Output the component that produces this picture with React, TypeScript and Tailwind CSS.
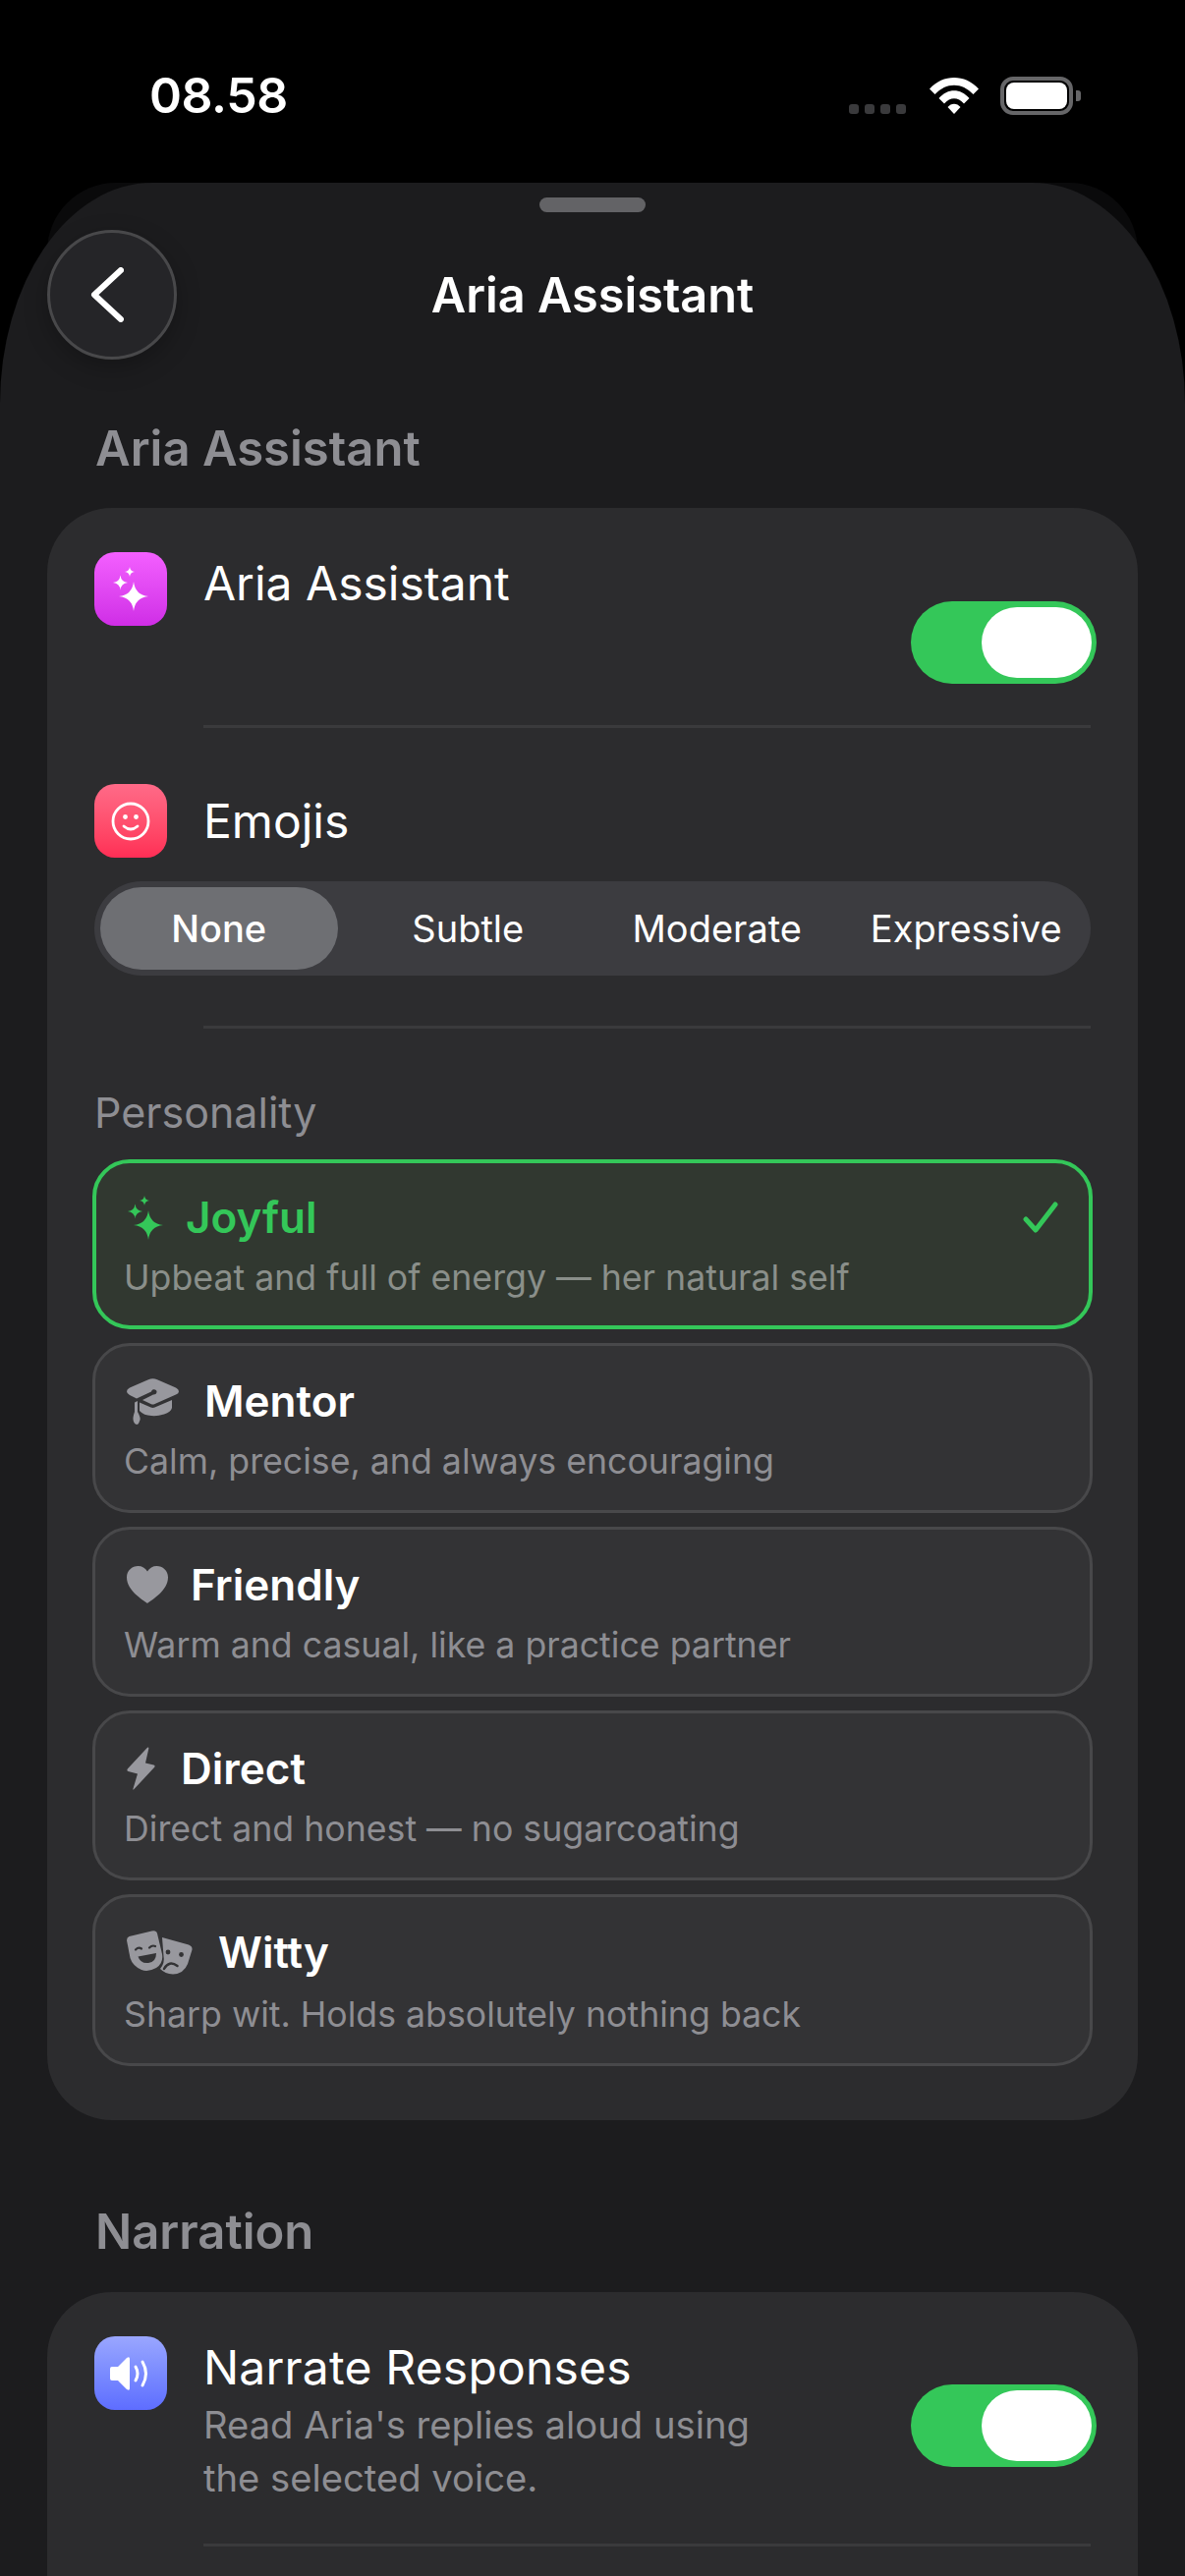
import React from "react";

const star = (cx: number, cy: number, r: number) => {
  const k = r * 0.1;
  return `M${cx} ${cy - r}Q${cx + k} ${cy - k} ${cx + r} ${cy}Q${cx + k} ${cy + k} ${cx} ${cy + r}Q${cx - k} ${cy + k} ${cx - r} ${cy}Q${cx - k} ${cy - k} ${cx} ${cy - r}Z`;
};

function Sparkles({ className }: { className: string }) {
  return (
    <svg viewBox="0 0 36 45" className={className} fill="currentColor">
      <path d={star(21, 30, 15)} />
      <path d={star(7.5, 16, 7.5)} />
      <path d={star(17, 5, 5)} />
    </svg>
  );
}

function Toggle({ className }: { className: string }) {
  return (
    <div className={`-mr-[6px] flex h-[84px] w-[189px] shrink-0 items-center justify-end rounded-full bg-[#34c759] pr-[5px] ${className}`}>
      <div className="h-[72px] w-[112px] rounded-full bg-white" />
    </div>
  );
}

function Divider() {
  return <div className="ml-[111px] h-[3px] bg-[#3a3a3c]" />;
}

function IconTile({ className, children }: { className: string; children: React.ReactNode }) {
  return (
    <div className={`flex h-[75px] w-[74px] shrink-0 items-center justify-center rounded-[21px] ${className}`}>
      {children}
    </div>
  );
}

function Mentor() {
  return (
    <svg viewBox="0 0 53 47" className="h-[47px] w-[53px]" fill="#98989e">
      <path d="M22 1.2Q26.5-.6 31 1.2L50 9.4Q53 11 53 13.2 53 15.3 50 16.6L28 26.2Q26.5 26.8 25 26.2L16 22 27 16.6Q30 16.8 30.6 14 30.4 10.8 27 11.2 25.4 11.6 25 13.4L10 20.6 3 17Q0 15.4 0 13.2 0 11 3 9.4Z" />
      <path d="M13 24.5 24.5 29.6Q26.5 30.4 28.5 29.6L46 22V30Q45 34 38 36.5 31 38.6 25 38 17.5 37.8 13 33Z" />
      <path d="M8 24.5 11 23V34Q15 41 13 43.5 12 47 10 47 8 47 7 44 5.6 40.5 8 34Z" />
    </svg>
  );
}

function Heart() {
  return (
    <svg viewBox="0 0 42 38" className="h-[38px] w-[42px]" fill="#98989e">
      <path d="M21 38C17 35 0 25 0 11.5 0 4.500 5.500 0 11.500 0 15.500 0 19 2 21 5.500 23 2 26.500 0 30.500 0 36.500 0 42 4.500 42 11.500 42 25 25 35 21 38Z" />
    </svg>
  );
}

function Bolt() {
  return (
    <svg viewBox="0 0 29 44" className="h-[44px] w-[29px]" fill="#98989e">
      <path d="M21 .8Q22.600 0 22.300 2L19 16.500 27.500 18.500Q29.500 19.500 28 21L7.500 43Q6 44.500 6.500 42.500L11 27.500 1.500 25Q-.5 24 1 22.300Z" />
    </svg>
  );
}

function Masks() {
  return (
    <svg viewBox="0 0 67 45" className="h-[45px] w-[67px]">
      <path d="M36 7 63 14.500Q67 16 66.500 19.500L62 34Q58 44 47 44.500 39 44 34 39 39 33 37.500 26Z" fill="#98989e" />
      <path d="M2.500 6 25.500.5Q30-.5 31 3L36 24Q37.500 33 30 38 22 42.500 15 40 6 36 3.500 28L0 10Q0 7 2.500 6Z" fill="#98989e" />
      <circle cx="42" cy="22" r="2.400" fill="#333335" />
      <circle cx="55.500" cy="24.500" r="2.400" fill="#333335" />
      <path d="M38 39Q43 30 51.500 36" fill="none" stroke="#333335" strokeWidth="2.500" strokeLinecap="round" />
      <path d="M9 19.500Q12 16.500 15 18.500M23 17.500Q26 14.500 29 16" fill="none" stroke="#333335" strokeWidth="2.200" strokeLinecap="round" />
      <path d="M11.500 26.500 30 23Q30 32 22 33 14 34 11.500 26.500Z" fill="#333335" />
    </svg>
  );
}

const personalities = [
  { name: "Mentor", sub: "Calm, precise, and always encouraging", icon: <Mentor />, gap: "gap-[26px]", box: "h-[173px]", subGap: "mt-[7px]" },
  { name: "Friendly", sub: "Warm and casual, like a practice partner", icon: <Heart />, gap: "gap-[23px]", box: "h-[173px]", subGap: "mt-[7px]" },
  { name: "Direct", sub: "Direct and honest — no sugarcoating", icon: <Bolt />, gap: "gap-[26px]", box: "h-[173px]", subGap: "mt-[7px]" },
  { name: "Witty", sub: "Sharp wit. Holds absolutely nothing back", icon: <Masks />, gap: "gap-[26px]", box: "h-[175px]", subGap: "mt-[9px]" },
];

export default function App() {
  return (
    <div className="relative flex h-[2622px] w-[1206px] flex-col overflow-hidden bg-black font-['Inter',sans-serif] text-white">
      <div className="flex h-[186px] shrink-0 items-start justify-between pl-[152px] pr-[106px] pt-[72px]">
        <div className="text-[50px] font-semibold leading-[50px] tracking-[-0.4px]">08.58</div>
        <div className="flex items-start pt-[6px]">
          <div className="mr-[24px] mt-[28px] flex gap-[6px]">
            {[0, 1, 2, 3].map((i) => (
              <div key={i} className="h-[10px] w-[10px] rounded-[3px] bg-[#3a3a3c]" />
            ))}
          </div>
          <svg viewBox="0 0 50 37" className="mr-[22px] mt-[1px] h-[37px] w-[50px]" fill="white">
            <path d="M0 11.500C14-3.800 36-3.800 50 11.500L44.500 17C33 4.500 17 4.500 5.500 17Z" />
            <path d="M9.500 21C18.500 10.500 31.500 10.500 40.500 21L35 26.500C29 19.500 21 19.500 15 26.500Z" />
            <path d="M18.500 30C22 25.500 28 25.500 31.500 30L25 37Z" />
          </svg>
          <div className="flex items-center">
            <div className="flex h-[39px] w-[74px] items-center justify-center rounded-[13px] border-[4px] border-[#666668]">
              <div className="h-[27px] w-[62px] rounded-[8px] bg-white" />
            </div>
            <div className="ml-[3px] h-[11px] w-[5px] rounded-r-[3px] bg-[#666668]" />
          </div>
        </div>
      </div>

      <div className="absolute left-[48px] right-[48px] top-[186px] h-[120px] rounded-t-[70px] bg-[#0a0a0b]" />

      <div className="relative flex-1 overflow-hidden rounded-tl-[155px_225px] rounded-tr-[155px_225px] bg-[#1c1c1e] px-[48px]">
        <div className="mx-auto mt-[15px] h-[15px] w-[108px] rounded-full bg-[#636366]" />
        <div className="mt-[18px] flex items-center">
          <button className="flex h-[132px] w-[132px] shrink-0 items-center justify-center rounded-full border-[3px] border-[#48484a] bg-[#252528] shadow-[0_8px_24px_rgba(0,0,0,0.25)]">
            <svg viewBox="0 0 34 56" className="mr-[10px] h-[56px] w-[34px]" fill="none" stroke="white" strokeWidth="6" strokeLinecap="round" strokeLinejoin="round">
              <path d="M31 3 4 28 31 53" />
            </svg>
          </button>
          <div className="flex-1 pt-[2px] text-center text-[48.7px] font-semibold leading-[60px]">Aria Assistant</div>
          <div className="w-[132px] shrink-0" />
        </div>

        <div className="ml-[49px] mt-[61px] text-[49px] font-semibold leading-[60px] text-[#8e8e93]">Aria Assistant</div>

        <div className="mt-[30px] rounded-[66px] bg-[#2c2c2e] px-[48px] pb-[55px] pt-[45px]">
          <div className="flex h-[176px] items-start gap-[37px]">
            <IconTile className="bg-gradient-to-b from-[#f45fff] to-[#cf2de6]">
              <Sparkles className="h-[45px] w-[36px] text-white" />
            </IconTile>
            <div className="mt-[2px] flex-1 text-[48px] leading-[60px]">Aria Assistant</div>
            <Toggle className="mt-[50px]" />
          </div>
          <Divider />

          <div className="mt-[57px] flex items-center gap-[37px]">
            <IconTile className="bg-gradient-to-b from-[#ff6a88] to-[#ff2d55]">
              <svg viewBox="0 0 40 40" className="h-[40px] w-[40px]" fill="none" stroke="white" strokeWidth="2.800">
                <circle cx="20" cy="20" r="18" />
                <circle cx="14.500" cy="15.500" r="2.400" fill="white" stroke="none" />
                <circle cx="25.500" cy="15.500" r="2.400" fill="white" stroke="none" />
                <path d="M13 25Q20 31 27 25" strokeLinecap="round" />
              </svg>
            </IconTile>
            <div className="text-[48px] leading-[60px]">Emojis</div>
          </div>

          <div className="mt-[24px] flex h-[96px] rounded-[48px] bg-[#3c3c40]">
            {["None", "Subtle", "Moderate", "Expressive"].map((s, i) => (
              <div key={s} className="flex-1 p-[6px]">
                <div
                  className={
                    i === 0
                      ? "flex h-full items-center justify-center rounded-[42px] bg-[#6e6f73] text-[38px] font-medium"
                      : "flex h-full items-center justify-center whitespace-nowrap text-[38px]"
                  }
                >
                  {s}
                </div>
              </div>
            ))}
          </div>

          <div className="mt-[51px]">
            <Divider />
          </div>

          <div className="mt-[55px] text-[43px] leading-[60px] text-[#8e8e93]">Personality</div>

          <div className="-mx-[2px] mt-[18px] flex flex-col gap-[14px]">
            <div className="relative h-[173px] rounded-[38px] border-[4px] border-[#34c759] bg-[#313830] pl-[28px] pt-[27px]">
              <div className="ml-[4px] flex h-[56px] items-center gap-[23px]">
                <Sparkles className="h-[45px] w-[36px] text-[#34c759]" />
                <div className="text-[44px] font-semibold leading-[56px] text-[#34c759]">Joyful</div>
              </div>
              <div className="mt-[7px] text-[35.7px] leading-[52px] text-[#8a8f8a]">Upbeat and full of energy — her natural self</div>
              <svg viewBox="0 0 36 32" className="absolute right-[31px] top-[39px] h-[32px] w-[36px]" fill="none" stroke="#34c759" strokeWidth="5" strokeLinecap="round" strokeLinejoin="round">
                <path d="M3 18 13 29 33 3" />
              </svg>
            </div>
            {personalities.map((p) => (
              <div key={p.name} className={`${p.box} rounded-[38px] border-[3px] border-[#48484a] bg-[#333335] pl-[29px] pt-[28px]`}>
                <div className={`ml-[3px] flex h-[56px] items-center ${p.gap}`}>
                  {p.icon}
                  <div className="text-[44px] font-semibold leading-[56px]">{p.name}</div>
                </div>
                <div className={`${p.subGap} text-[35.7px] leading-[52px] text-[#8e8e93]`}>{p.sub}</div>
              </div>
            ))}
          </div>
        </div>

        <div className="ml-[49px] mt-[84px] text-[49px] font-semibold leading-[60px] text-[#8e8e93]">Narration</div>

        <div className="mt-[31px] h-[400px] rounded-t-[66px] bg-[#2c2c2e] px-[48px] pt-[45px]">
          <div className="flex h-[211px] items-start gap-[37px]">
            <IconTile className="bg-gradient-to-b from-[#9aa6ff] to-[#5e6dff]">
              <svg viewBox="0 0 42 34" className="h-[34px] w-[42px]" fill="white">
                <path d="M0 12Q0 10 2 10H8L17 1Q20-1 20 2V32Q20 35 17 33L8 24H2Q0 24 0 22Z" />
                <path d="M26 10Q30 17 26 24M33 5Q40 17 33 29" fill="none" stroke="white" strokeWidth="3" strokeLinecap="round" />
              </svg>
            </IconTile>
            <div className="mt-[2px] flex-1">
              <div className="text-[48px] leading-[60px] tracking-[0.2px]">Narrate Responses</div>
              <div className="mt-[1px] w-[620px] text-[38.2px] leading-[54px] text-[#8e8e93]">
                Read Aria's replies aloud using the selected voice.
              </div>
            </div>
            <Toggle className="mt-[49px]" />
          </div>
          <Divider />
        </div>
      </div>
    </div>
  );
}
